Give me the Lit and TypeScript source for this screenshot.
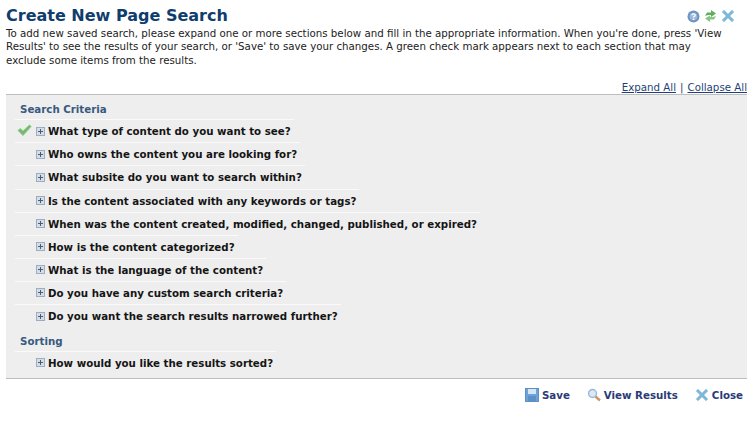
import { LitElement, html, css, svg } from "lit";
import { customElement } from "lit/decorators.js";

const CRITERIA = [
  "What type of content do you want to see?",
  "Who owns the content you are looking for?",
  "What subsite do you want to search within?",
  "Is the content associated with any keywords or tags?",
  "When was the content created, modified, changed, published, or expired?",
  "How is the content categorized?",
  "What is the language of the content?",
  "Do you have any custom search criteria?",
  "Do you want the search results narrowed further?",
];

const closeIcon = svg`<svg class="icon" width="14" height="14" viewBox="0 0 14 14"><path d="M1 3 L3 1 L7 5 L11 1 L13 3 L9 7 L13 11 L11 13 L7 9 L3 13 L1 11 L5 7 Z" fill="#7db8d8" stroke="#a5d0e6" stroke-width=".6"/></svg>`;

@customElement("app-root")
export class AppRoot extends LitElement {
  static styles = css`
    :host {
      display: block;
      width: 750px;
      height: 423px;
      background: #fff;
      font-family: "DejaVu Sans", Verdana, sans-serif;
      font-size: 10.25px;
      color: #111;
      overflow: hidden;
    }

    .head {
      padding: 6px 6px 0 6px;
    }

    .title-row {
      display: flex;
      justify-content: space-between;
      align-items: center;
      height: 20px;
    }

    h1 {
      margin: 0;
      font-size: 16px;
      font-weight: bold;
      color: #0f3d6e;
      line-height: 20px;
    }

    .tools {
      display: flex;
      gap: 4px;
      align-items: center;
      padding-right: 9px;
    }

    .intro {
      margin: 0;
      line-height: 13.4px;
      color: #222;
      width: 722px;
      padding-top: 1px;
    }

    .links {
      display: flex;
      justify-content: flex-end;
      gap: 4px;
      padding: 14px 3px 0 0;
      line-height: 13px;
      color: #1f3f78;
    }

    .links a {
      color: #1f3f78;
      text-decoration: underline;
    }

    .panel {
      box-sizing: border-box;
      margin: 0 3px 0 6px;
      height: 285px;
      background: #eeeeee;
      border-top: 1px solid #bdbdbd;
      border-bottom: 1px solid #bdbdbd;
      padding-top: 7px;
    }

    h2 {
      margin: 0;
      padding-left: 14px;
      font-size: 10.25px;
      font-weight: bold;
      color: #37597f;
      line-height: 14px;
      height: 17px;
    }

    .row {
      display: flex;
      align-items: center;
      gap: 3px;
      width: fit-content;
      height: 22.1px;
      margin-left: 9px;
      padding: 0 3px 0 21px;
      border-top: 1px solid #fafafa;
      position: relative;
      font-weight: bold;
      color: #151515;
      white-space: nowrap;
    }

    .row .check {
      position: absolute;
      left: 2px;
      top: 4px;
    }

    .sorting {
      margin-top: 6.5px;
    }

    .plus {
      flex: none;
    }

    .footer {
      display: flex;
      justify-content: flex-end;
      gap: 17px;
      padding: 9px 7px 0 0;
    }

    .action {
      display: flex;
      align-items: center;
      gap: 3px;
      font-weight: bold;
      color: #2b3a78;
      line-height: 14px;
    }
  `;

  private plus() {
    return svg`<svg class="plus" width="9" height="9" viewBox="0 0 9 9"><rect x=".5" y=".5" width="8" height="8" fill="#d5dde6" stroke="#9dacbe"/><path d="M2 4.5 H7 M4.5 2 V7" stroke="#4a5c75" stroke-width="1"/></svg>`;
  }

  private row(label: string, checked = false) {
    return html`<div class="row">
      ${checked
        ? svg`<svg class="check" width="15" height="13" viewBox="0 0 15 13"><path d="M.8 6.5 L3.4 4.2 L6 6.8 L12.4 .8 L14.4 2.6 L6 11.8 Z" fill="#74bb70" stroke="#a6d6a3" stroke-width=".6"/></svg>`
        : ""}
      ${this.plus()}<span>${label}</span>
    </div>`;
  }

  render() {
    return html`
      <div class="head">
        <div class="title-row">
          <h1>Create New Page Search</h1>
          <div class="tools">
            <svg class="icon" width="13" height="13" viewBox="0 0 13 13">
              <circle cx="6.5" cy="6.5" r="6" fill="#6f94c4" />
              <circle cx="6.5" cy="6.5" r="3.8" fill="#9db9da" />
              <path d="M4.8 5.2 C5 3.4 8.2 3.4 8.2 5.2 C8.2 6.4 6.5 6.3 6.5 7.6" fill="none" stroke="#fff" stroke-width="1.3" />
              <rect x="5.8" y="8.6" width="1.4" height="1.4" fill="#fff" />
            </svg>
            <svg class="icon" width="13" height="14" viewBox="0 0 13 14">
              <path d="M1 7 L3 3.5 H7 V1 L12 4.5 L7 8 V6 H4 Z" fill="#5fae5c" />
              <path d="M12 7 L10 10.5 H6 V13 L1 9.5 L6 6.5 V8 H9 Z" fill="#86c684" />
            </svg>
            ${closeIcon}
          </div>
        </div>
        <p class="intro">
          To add new saved search, please expand one or more sections below and
          fill in the appropriate information. When you're done, press 'View
          Results' to see the results of your search, or 'Save' to save your
          changes. A green check mark appears next to each section that may
          exclude some items from the results.
        </p>
      </div>
      <div class="links">
        <a>Expand All</a><span>|</span><a>Collapse All</a>
      </div>
      <div class="panel">
        <h2>Search Criteria</h2>
        ${CRITERIA.map((c, i) => this.row(c, i === 0))}
        <h2 class="sorting">Sorting</h2>
        ${this.row("How would you like the results sorted?")}
      </div>
      <div class="footer">
        <span class="action">
          <svg width="14" height="14" viewBox="0 0 14 14">
            <rect x=".5" y=".5" width="13" height="13" fill="#6fa3d6" stroke="#5c8fc2" />
            <rect x="3" y="1" width="8" height="5" fill="#d6e6f5" />
            <rect x="3" y="8" width="8" height="5" fill="#5b90c8" />
          </svg>
          Save
        </span>
        <span class="action">
          <svg width="14" height="14" viewBox="0 0 14 14">
            <circle cx="5.5" cy="5.5" r="4" fill="#d8e8f6" stroke="#9cb9d6" stroke-width="1.4" />
            <path d="M8.5 8.5 L13 12.5" stroke="#c89a6a" stroke-width="2.4" />
          </svg>
          View Results
        </span>
        <span class="action">${closeIcon} Close</span>
      </div>
    `;
  }
}

declare global {
  interface HTMLElementTagNameMap {
    "app-root": AppRoot;
  }
}
